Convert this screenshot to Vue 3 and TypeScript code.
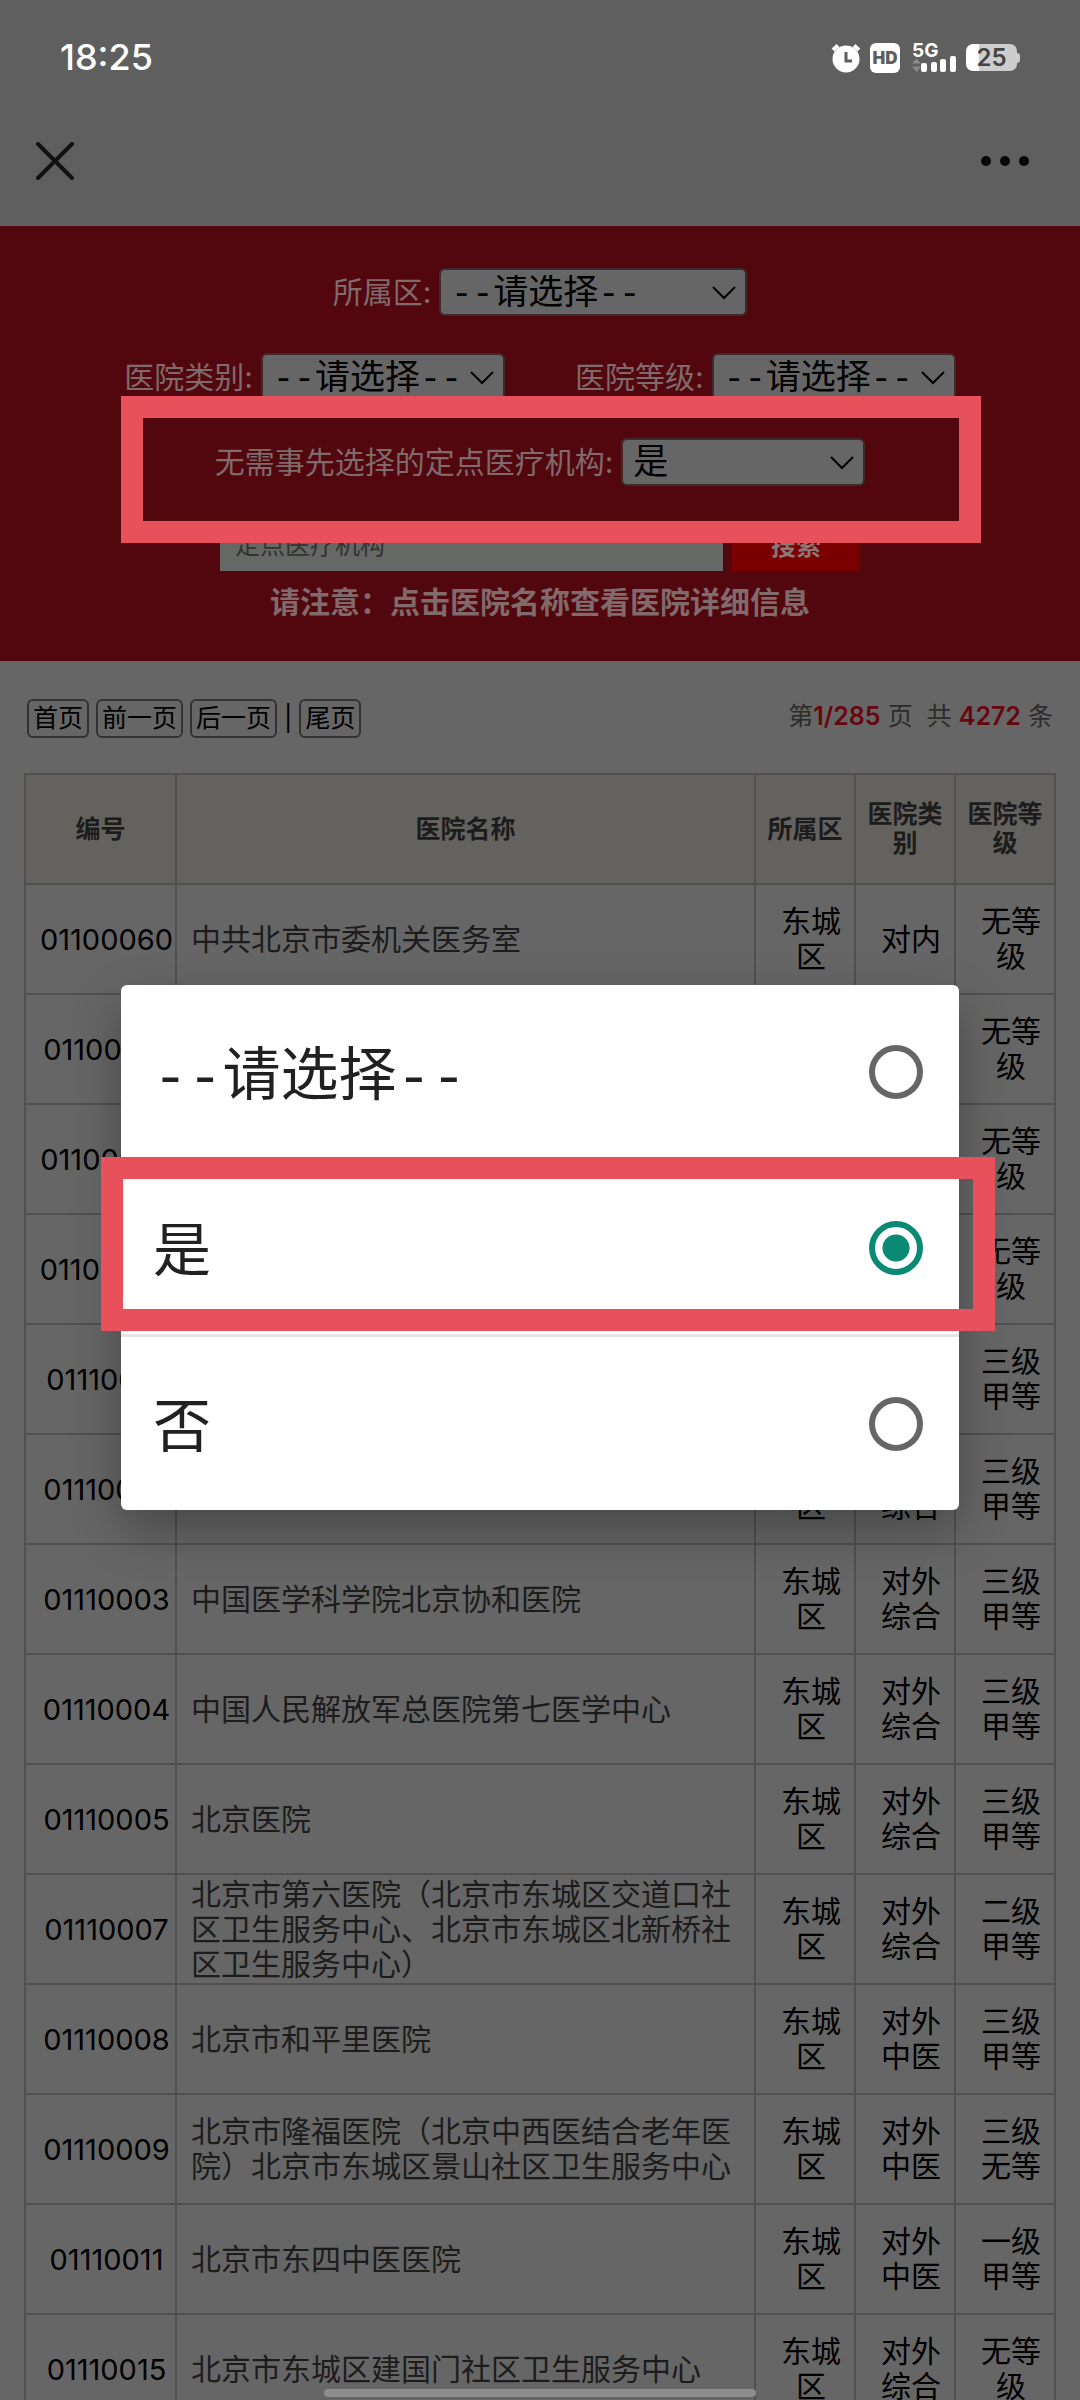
<script setup lang="ts">
import { ref } from 'vue'

interface Hospital {
  code: string
  name: string
  district: string
  kind: string
  grade: string
}

const hospitals: Hospital[] = [
  { code: '01100060', name: '中共北京市委机关医务室', district: '东城区', kind: '对内', grade: '无等级' },
  { code: '01100061', name: '北京市东城区机关医务室', district: '东城区', kind: '对内', grade: '无等级' },
  { code: '01100062', name: '北京市东城区政府医务室', district: '东城区', kind: '对内', grade: '无等级' },
  { code: '01100064', name: '北京市东城区学校医务室', district: '东城区', kind: '对内', grade: '无等级' },
  { code: '01110001', name: '首都医科大学附属北京中医医院', district: '东城区', kind: '对外中医', grade: '三级甲等' },
  { code: '01110002', name: '首都医科大学附属北京同仁医院', district: '东城区', kind: '对外综合', grade: '三级甲等' },
  { code: '01110003', name: '中国医学科学院北京协和医院', district: '东城区', kind: '对外综合', grade: '三级甲等' },
  { code: '01110004', name: '中国人民解放军总医院第七医学中心', district: '东城区', kind: '对外综合', grade: '三级甲等' },
  { code: '01110005', name: '北京医院', district: '东城区', kind: '对外综合', grade: '三级甲等' },
  { code: '01110007', name: '北京市第六医院（北京市东城区交道口社区卫生服务中心、北京市东城区北新桥社区卫生服务中心）', district: '东城区', kind: '对外综合', grade: '二级甲等' },
  { code: '01110008', name: '北京市和平里医院', district: '东城区', kind: '对外中医', grade: '三级甲等' },
  { code: '01110009', name: '北京市隆福医院（北京中西医结合老年医院）北京市东城区景山社区卫生服务中心', district: '东城区', kind: '对外中医', grade: '三级无等' },
  { code: '01110011', name: '北京市东四中医医院', district: '东城区', kind: '对外中医', grade: '一级甲等' },
  { code: '01110015', name: '北京市东城区建国门社区卫生服务中心', district: '东城区', kind: '对外综合', grade: '无等级' },
]

const placeholder = '--请选择--'
const choices = [placeholder, '是', '否']
const chosen = ref('是')
const keyword = ref('')
</script>

<template>
  <div class="screen">
    <header>
      <div class="status">
        <span class="clock">18:25</span>
        <div class="indicators">
          <svg class="alarm" width="30" height="30" viewBox="0 0 30 30" aria-label="闹钟">
            <path d="M2 7L7 2.500M28 7L23 2.500" stroke="#fff" stroke-width="4" fill="none" />
            <circle cx="15" cy="16" r="13.500" fill="#fff" />
            <path d="M15 9v9h6" stroke="#5f5f5f" stroke-width="3" fill="none" />
          </svg>
          <span class="hd">HD</span>
          <svg class="signal" width="46" height="31" viewBox="0 0 46 31" aria-label="5G">
            <text x="0" y="15" font-size="19" font-weight="700" fill="#fff">5G</text>
            <path d="M0 21.500L4.500 16.500L9 21.500zM0 24.500h9L4.500 30z" fill="#8a8a8a" />
            <g fill="#fff">
              <rect x="9" y="21" width="6" height="9" rx="2" />
              <rect x="19" y="20" width="6" height="10" rx="2" />
              <rect x="28" y="17" width="6" height="13" rx="2" />
              <rect x="38" y="14" width="6" height="16" rx="2" />
            </g>
          </svg>
          <div class="battery"><span>25</span></div>
        </div>
      </div>
      <nav class="navbar">
        <button type="button" aria-label="关闭">
          <svg width="38" height="38" viewBox="0 0 38 38">
            <path d="M2 2L36 36M36 2L2 36" stroke="#111" stroke-width="4" stroke-linecap="round" />
          </svg>
        </button>
        <button type="button" aria-label="更多">
          <svg width="50" height="12" viewBox="0 0 50 12" fill="#080808">
            <circle cx="6" cy="6" r="5" /><circle cx="25" cy="6" r="5" /><circle cx="44" cy="6" r="5" />
          </svg>
        </button>
      </nav>
    </header>

    <form class="filters" @submit.prevent>
      <div class="row">
        <div class="field">
          <label for="district">所属区:</label>
          <span class="picker wide">
            <select id="district"><option>{{ placeholder }}</option></select>
            <svg width="24" height="14" viewBox="0 0 24 14"><path d="M1 1L12 12L23 1" /></svg>
          </span>
        </div>
      </div>
      <div class="row pair">
        <div class="field">
          <label for="kind">医院类别:</label>
          <span class="picker">
            <select id="kind"><option>{{ placeholder }}</option></select>
            <svg width="24" height="14" viewBox="0 0 24 14"><path d="M1 1L12 12L23 1" /></svg>
          </span>
        </div>
        <div class="field">
          <label for="grade">医院等级:</label>
          <span class="picker">
            <select id="grade"><option>{{ placeholder }}</option></select>
            <svg width="24" height="14" viewBox="0 0 24 14"><path d="M1 1L12 12L23 1" /></svg>
          </span>
        </div>
      </div>
      <div class="row marked">
        <div class="field">
          <label for="preset">无需事先选择的定点医疗机构:</label>
          <span class="picker">
            <select id="preset" v-model="chosen">
              <option v-for="c in choices" :key="c">{{ c }}</option>
            </select>
            <svg width="24" height="14" viewBox="0 0 24 14"><path d="M1 1L12 12L23 1" /></svg>
          </span>
        </div>
        <div class="mark mark-filter"></div>
      </div>
      <div class="row search">
        <input v-model="keyword" type="text" placeholder="定点医疗机构" aria-label="定点医疗机构" />
        <button type="submit">搜索</button>
      </div>
      <p class="notice">请注意：点击医院名称查看医院详细信息</p>
    </form>

    <main>
      <div class="pager">
        <div class="pages">
          <button type="button">首页</button>
          <button type="button">前一页</button>
          <button type="button">后一页</button>
          <span class="bar">|</span>
          <button type="button">尾页</button>
        </div>
        <p class="total">第<b>1/285</b> 页 &nbsp;共 <b>4272</b> 条</p>
      </div>

      <table>
        <colgroup>
          <col class="c-code" /><col /><col class="c-small" /><col class="c-small" /><col class="c-small" />
        </colgroup>
        <thead>
          <tr><th>编号</th><th>医院名称</th><th>所属区</th><th>医院类别</th><th>医院等级</th></tr>
        </thead>
        <tbody>
          <tr v-for="h in hospitals" :key="h.code">
            <td class="code">{{ h.code }}</td>
            <td class="name"><a href="#">{{ h.name }}</a></td>
            <td>{{ h.district }}</td>
            <td>{{ h.kind }}</td>
            <td>{{ h.grade }}</td>
          </tr>
        </tbody>
      </table>
    </main>

    <div class="overlay">
      <div class="dialog" role="dialog" aria-label="请选择">
        <div v-for="c in choices" :key="c" class="option">
          <label>
            <span>{{ c }}</span>
            <input v-model="chosen" type="radio" name="choice" :value="c" />
          </label>
          <div v-if="c === '是'" class="mark mark-option"></div>
        </div>
      </div>
    </div>
    <div class="home"></div>
  </div>
</template>

<style>
body {
  margin: 0;
  background: #666;
}
</style>

<style scoped>
.screen {
  position: relative;
  height: 100vh;
  overflow: hidden;
  background: #666;
  color: #000;
  font-family: Inter, "Noto Sans CJK SC", sans-serif;
  font-size: 30px;
  line-height: 35px;
}
.screen * {
  box-sizing: border-box;
}
button,
input,
select {
  margin: 0;
  font-family: inherit;
}
p {
  margin: 0;
}
header {
  background: #5f5f5f;
}
.status {
  display: flex;
  justify-content: space-between;
  align-items: center;
  height: 95px;
  padding: 20px 60px 0;
  color: #fff;
}
.clock {
  font-size: 36px;
  font-weight: 500;
}
.indicators {
  display: flex;
  align-items: center;
}
.hd {
  width: 30px;
  height: 30px;
  margin: 0 12px 0 9px;
  border-radius: 6px;
  background: #fff;
  color: #5f5f5f;
  font-size: 17px;
  font-weight: 900;
  line-height: 30px;
  text-align: center;
}
.battery {
  position: relative;
  width: 51px;
  height: 27px;
  margin: 0 3px 0 8px;
  border-radius: 7px;
  background: linear-gradient(90deg, #fff 13px, #cdcdcd 13px);
  color: #444;
  font-size: 24px;
  font-weight: 600;
  line-height: 28px;
  text-align: center;
}
.battery::after {
  content: "";
  position: absolute;
  top: 9px;
  right: -3px;
  width: 3px;
  height: 10px;
  border-radius: 0 3px 3px 0;
  background: #cdcdcd;
}
.navbar {
  display: flex;
  justify-content: space-between;
  align-items: center;
  height: 131px;
  padding: 0 50px 0 36px;
}
.navbar button {
  display: flex;
  padding: 0;
  border: 0;
  background: none;
}
.filters {
  display: flex;
  flex-direction: column;
  gap: 37px;
  padding: 42px 0 41px;
  background: #52070f;
  color: #806a6b;
}
.row {
  display: flex;
  justify-content: center;
  height: 48px;
}
.pair {
  gap: 70px;
}
.field {
  display: flex;
  align-items: center;
  gap: 8px;
}
.picker {
  position: relative;
  width: 244px;
  height: 48px;
}
.wide {
  width: 308px;
}
.picker select {
  appearance: none;
  width: 100%;
  height: 100%;
  padding: 5px 10px 0;
  border: 2px solid #3c2c2e;
  border-radius: 6px;
  background: #666;
  color: #000;
  font-family: "Liberation Mono", "Noto Sans CJK SC", monospace;
  font-size: 35px;
}
.picker svg {
  position: absolute;
  top: 18px;
  right: 11px;
  fill: none;
  stroke: #000;
  stroke-width: 2;
  pointer-events: none;
}
.marked {
  position: relative;
}
.mark {
  position: absolute;
  z-index: 1;
  border: 22px solid #e8505b;
  pointer-events: none;
}
.mark-filter {
  top: -42px;
  right: 99px;
  bottom: -57px;
  left: 121px;
}
.search {
  gap: 9px;
}
.search input {
  width: 503px;
  padding: 0 15px 4px;
  border: 0;
  background: #666866;
  font-size: 25px;
}
.search input::placeholder {
  color: #333;
  opacity: 1;
}
.search button {
  width: 128px;
  padding: 0 0 6px;
  border: 0;
  background: #7a0000;
  color: #8c7677;
  font-size: 25px;
  font-weight: 700;
}
.notice {
  margin-top: -24px;
  line-height: 36px;
  font-weight: 700;
  text-align: center;
}
main {
  padding: 38px 24px 0;
}
.pager {
  display: flex;
  justify-content: space-between;
  align-items: center;
  margin-bottom: 35px;
  padding: 0 3px;
  font-size: 25px;
}
.pages {
  display: flex;
  align-items: center;
  gap: 7px;
}
.pages button {
  height: 39px;
  padding: 0 4px;
  border: 2px solid #333;
  border-radius: 6px;
  background: none;
  color: #000;
  font-size: 25px;
  line-height: 33px;
}
.total {
  padding-bottom: 4px;
  color: #2c2c2c;
}
.total b {
  color: #68060f;
  font-weight: 600;
}
table {
  width: 100%;
  table-layout: fixed;
  border-collapse: collapse;
}
.c-code {
  width: 151px;
}
.c-small {
  width: 100px;
}
tr {
  height: 110px;
}
th,
td {
  border: 2px solid #505050;
  text-align: center;
  vertical-align: middle;
}
th {
  padding: 0 6px;
  background: #64625e;
  color: #1c1c1c;
  font-size: 25px;
  line-height: 29px;
}
td {
  padding: 0 0 0 12px;
}
.code {
  font-size: 29px;
}
.name {
  padding-left: 14px;
  text-align: left;
}
.name a {
  color: #1c1c1c;
  text-decoration: none;
}
.overlay {
  position: absolute;
  inset: 95px 0 0;
  display: flex;
  flex-direction: column;
  justify-content: center;
  padding: 0 121px;
}
.dialog {
  border-radius: 6px;
  background: #fff;
  box-shadow: 0 20px 50px rgba(0, 0, 0, 0.3);
  color: #212121;
  font-family: "Liberation Mono", "Noto Sans CJK SC", monospace;
  font-size: 58px;
}
.option {
  position: relative;
}
.option + .option {
  border-top: 3px solid #e8e2e6;
}
.option label {
  display: flex;
  justify-content: space-between;
  align-items: center;
  height: 173px;
  padding: 0 36px 0 32px;
  line-height: 80px;
}
.option span {
  padding-top: 16px;
}
.option input {
  appearance: none;
  width: 54px;
  height: 54px;
  border: 6px solid #666;
  border-radius: 50%;
}
.option input:checked {
  border-color: #0a8a74;
  background: radial-gradient(circle, #0a8a74 13px, #fff 14px);
}
.mark-option {
  top: -4px;
  right: -36px;
  bottom: 3px;
  left: -20px;
}
.home {
  position: absolute;
  bottom: 3px;
  left: 30%;
  width: 40%;
  height: 8px;
  border-radius: 4px;
  background: #8d8d8d;
}
</style>
